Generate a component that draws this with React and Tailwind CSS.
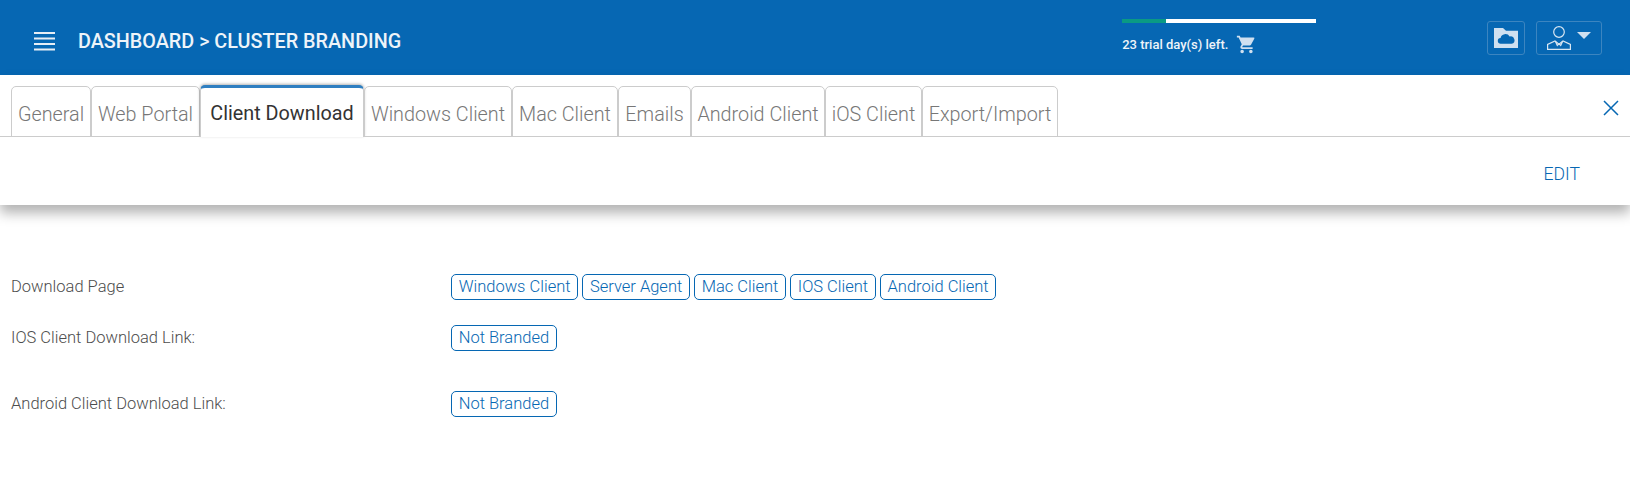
import React from 'react';
import { MdShoppingCart } from 'react-icons/md';

const tabs = [
  { name: 'General', w: 'w-[80px]' },
  { name: 'Web Portal', w: 'w-[109px]' },
  { name: 'Client Download', w: 'w-[164px]', active: true },
  { name: 'Windows Client', w: 'w-[148px]' },
  { name: 'Mac Client', w: 'w-[106px]' },
  { name: 'Emails', w: 'w-[73px]' },
  { name: 'Android Client', w: 'w-[134px]' },
  { name: 'iOS Client', w: 'w-[97px]' },
  { name: 'Export/Import', w: 'w-[136px]' },
];

const downloads = ['Windows Client', 'Server Agent', 'Mac Client', 'IOS Client', 'Android Client'];

function Chip({ children }) {
  return (
    <span className="h-[26px] px-[6.7px] pt-[1px] flex items-center border border-[#0667b3] rounded-[5px] text-[16.5px] font-light text-[#0667b3] whitespace-nowrap">
      {children}
    </span>
  );
}

function Row({ label, className = '', children }) {
  return (
    <div className={`flex items-center ${className}`}>
      <div className="w-[440px] pt-[1px] text-[16.5px] font-light text-[#4d4d4d]">{label}</div>
      <div className="flex gap-[4px]">{children}</div>
    </div>
  );
}

export default function App() {
  return (
    <div className="h-[478px] bg-white overflow-hidden font-['Roboto',sans-serif]">
      {/* top bar */}
      <header className="h-[75px] bg-[#0667b3] flex items-center text-white">
        <svg width="21" height="20" viewBox="0 0 21 20" className="ml-[34px] mt-[6px]" fill="#e6eef6">
          <rect y="1" width="21" height="2" />
          <rect y="6.500" width="21" height="2" />
          <rect y="12" width="21" height="2" />
          <rect y="17.500" width="21" height="2" />
        </svg>
        <h1 className="ml-[23px] mt-[8px] text-[19.8px] font-medium text-[#eef4f9]">DASHBOARD &gt; CLUSTER BRANDING</h1>

        <div className="ml-[721px] w-[194px] self-start pt-[19px]">
          <div className="h-[4px] flex bg-white">
            <div className="w-[44px] bg-[#0a9a84]" />
          </div>
          <div className="mt-[11px] flex items-center text-[13px] font-medium text-[#eef4f9]">
            <span>23 trial day(s) left.</span>
            <MdShoppingCart className="ml-[8px] text-[21px] text-[#cfe0f0]" />
          </div>
        </div>

        <button className="ml-[171px] w-[38px] h-[34px] border border-[#3c85c0] rounded-[3px] flex items-center justify-center">
          <svg width="24" height="20" viewBox="0 0 24 21" preserveAspectRatio="none">
            <path d="M0 0h9l3 3h12v18H0z" fill="#cfe0f0" />
            <path
              d="M7 16.500a3 3 0 0 1-.4-6 4.800 4.800 0 0 1 9-1.500 3.800 3.800 0 0 1 2 7.500z"
              fill="#0667b3"
            />
          </svg>
        </button>
        <button className="ml-[11px] w-[66px] h-[34px] border border-[#3c85c0] rounded-[3px] flex items-center pl-[10px]">
          <svg width="24" height="24" viewBox="0 0 24 24" fill="none" stroke="#d8e6f2" strokeWidth="1.200">
            <circle cx="12" cy="6" r="5.300" />
            <path d="M.6 23.400v-4.900l7.400-3.500 4 3.200 4-3.200 7.400 3.500v4.900z" />
            <path d="M8.500 15.500l1.800 4 1.700-1.600 1.700 1.600 1.800-4" />
          </svg>
          <span className="ml-[6px] mb-[5px] w-0 h-0 border-x-[7.5px] border-x-transparent border-t-[7px] border-t-[#cfe0f0]" />
        </button>
      </header>

      {/* tabs and edit card */}
      <section className="h-[130px] bg-white shadow-[0_8px_12px_rgba(0,0,0,0.3)]">
        <div className="relative h-[62px] pt-[11px] pl-[11px] flex border-b border-[#ccc]">
          {tabs.map(tab => (
            <div
              key={tab.name}
              className={
                tab.active
                  ? `${tab.w} h-[52px] -mt-[1px] pt-[3px] bg-white border-x border-[#ccc] border-t-[3px] border-t-[#2f7fc1] rounded-t-[5px] flex items-center justify-center text-[19.8px] font-normal text-[#333] shadow-[0_-1px_3px_rgba(0,0,0,0.3)]`
                  : `${tab.w} h-[51px] pt-[7px] border border-[#ccc] rounded-t-[5px] flex items-center justify-center text-[19.8px] font-light text-[#777] whitespace-nowrap`
              }
            >
              {tab.name}
            </div>
          ))}
          <svg
            width="16"
            height="16"
            viewBox="0 0 16 16"
            className="absolute right-[11px] top-[25px]"
            stroke="#0667b3"
            strokeWidth="1.500"
          >
            <path d="M1 1l14 14M15 1L1 15" />
          </svg>
        </div>
        <div className="flex justify-end pt-[24px] pr-[50px] text-[17.6px] font-light text-[#0667b3]">EDIT</div>
      </section>

      {/* branding rows */}
      <main className="pl-[11px] pt-[69px]">
        <Row label="Download Page">
          {downloads.map(name => (
            <Chip key={name}>{name}</Chip>
          ))}
        </Row>
        <Row label="IOS Client Download Link:" className="mt-[25px]">
          <Chip>Not Branded</Chip>
        </Row>
        <Row label="Android Client Download Link:" className="mt-[40px]">
          <Chip>Not Branded</Chip>
        </Row>
      </main>
    </div>
  );
}
